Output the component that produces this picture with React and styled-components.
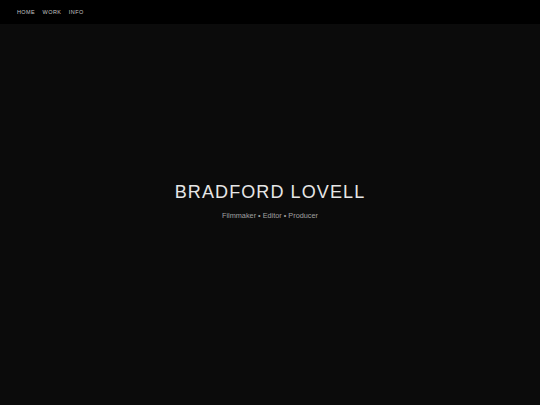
import React from "react"
import styled, { createGlobalStyle } from "styled-components"

const Global = createGlobalStyle`
    html, body {
        margin: 0;
        padding: 0;
        background: #0b0b0b;
        font-family: "Liberation Sans", Arial, sans-serif;
    }
`

const Page = styled.div`
    width: 100%;
    height: 405px;
    display: flex;
    flex-direction: column;
    background: #0b0b0b;
`

const Header = styled.header`
    height: 24px;
    background: #000;
    display: flex;
    align-items: center;
    padding: 0 17px;
    gap: 7.5px;
`

const NavLink = styled.a`
    color: #c4c4c4;
    font-size: 5.5px;
    letter-spacing: 0.4px;
    text-decoration: none;
    text-transform: uppercase;
`

const Hero = styled.main`
    flex: 1;
    display: flex;
    flex-direction: column;
    align-items: center;
    justify-content: center;
    padding-bottom: 28px;
`

const Title = styled.h1`
    margin: 0;
    color: #e6e6e6;
    font-size: 18px;
    font-weight: 400;
    letter-spacing: 1.1px;
`

const Subtitle = styled.p`
    margin: 8px 0 0;
    color: #a0a0a0;
    font-size: 7.3px;
`

export default function App() {
    return (
        <Page>
            <Global />
            <Header>
                <NavLink href="#">Home</NavLink>
                <NavLink href="#">Work</NavLink>
                <NavLink href="#">Info</NavLink>
            </Header>
            <Hero>
                <Title>BRADFORD LOVELL</Title>
                <Subtitle>Filmmaker • Editor • Producer</Subtitle>
            </Hero>
        </Page>
    )
}
